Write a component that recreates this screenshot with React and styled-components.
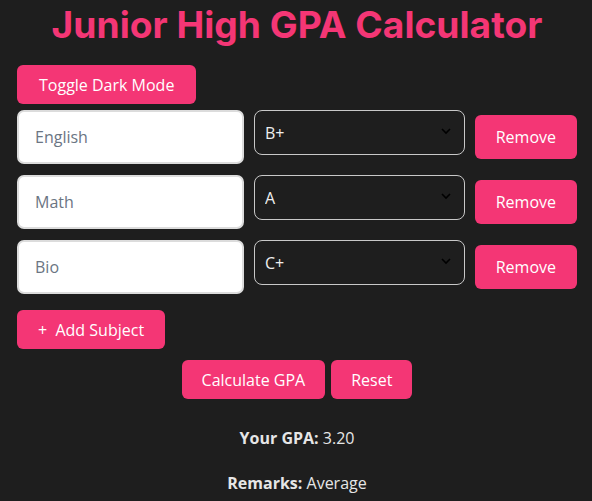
import React, { useState } from "react";
import styled, { createGlobalStyle } from "styled-components";

const GlobalStyle = createGlobalStyle`
  html, body {
    margin: 0;
    padding: 0;
    background: #1e1e1e;
  }
  body {
    font-family: "Open Sans", "Noto Sans", sans-serif;
    color: #e8e8e8;
  }
`;

const PINK = "#f43675";

const Page = styled.div`
  min-height: 501px;
  padding: 0 15px 0 17px;
  box-sizing: border-box;
`;

const Title = styled.h1`
  margin: 0;
  padding-top: 2px;
  height: 65px;
  box-sizing: border-box;
  text-align: center;
  font-family: "Inter", "Noto Sans", sans-serif;
  font-size: 37.2px;
  line-height: 45px;
  font-weight: 700;
  color: ${PINK};
`;

const Button = styled.button`
  background: ${PINK};
  color: #fff;
  border: none;
  border-radius: 6px;
  font-family: "Open Sans", "Noto Sans", sans-serif;
  font-size: 16px;
  height: ${(p) => p.$h || 39}px;
  padding: 0 ${(p) => p.$px || 20}px;
  cursor: pointer;
  margin-top: ${(p) => p.$mt || 0}px;
  flex-shrink: 0;
`;

const Rows = styled.div`
  display: flex;
  flex-direction: column;
  gap: 11px;
  margin-top: 6px;
`;

const Row = styled.div`
  display: flex;
  align-items: flex-start;
  gap: 10px;
`;

const SubjectInput = styled.input`
  width: 227px;
  height: 54px;
  box-sizing: border-box;
  border: 2px solid #dcdcdc;
  border-radius: 7px;
  background: #fff;
  padding: 0 16px;
  font-family: "Open Sans", "Noto Sans", sans-serif;
  font-size: 16px;
  color: #333;
  &::placeholder {
    color: #6b7583;
  }
`;

const SelectWrap = styled.div`
  position: relative;
  width: 212px;
  height: 45px;
`;

const GradeSelect = styled.select`
  appearance: none;
  width: 100%;
  height: 100%;
  box-sizing: border-box;
  background: #1e1e1e;
  border: 1px solid #c8c8c8;
  border-radius: 8px;
  color: #eee;
  font-family: "Open Sans", "Noto Sans", sans-serif;
  font-size: 16px;
  padding: 0 10px;
`;

const Chevron = styled.svg`
  position: absolute;
  right: 13px;
  top: 15px;
  pointer-events: none;
`;

const AddRow = styled.div`
  margin-top: 16px;
`;

const Actions = styled.div`
  display: flex;
  justify-content: center;
  gap: 6px;
  margin-top: 11px;
`;

const Result = styled.p`
  margin: ${(p) => p.$mt}px 0 0;
  text-align: center;
  font-size: 16px;
  line-height: 22px;
  color: #e6e6e6;
  b {
    font-weight: 700;
  }
`;

const grades = ["A", "B+", "B", "C+", "C", "D", "F"];

const App = () => {
  const [subjects] = useState([
    { name: "English", grade: "B+" },
    { name: "Math", grade: "A" },
    { name: "Bio", grade: "C+" },
  ]);

  return (
    <Page>
      <GlobalStyle />
      <Title>Junior High GPA Calculator</Title>
      <Button $px={22}>Toggle Dark Mode</Button>
      <Rows>
        {subjects.map((s) => (
          <Row key={s.name}>
            <SubjectInput placeholder={s.name} />
            <SelectWrap>
              <GradeSelect defaultValue={s.grade}>
                {grades.map((g) => (
                  <option key={g}>{g}</option>
                ))}
              </GradeSelect>
              <Chevron width="12" height="12" viewBox="0 0 12 12">
                <path d="M2 4l4 4 4-4" fill="none" stroke="#000" strokeWidth="1.6" />
              </Chevron>
            </SelectWrap>
            <Button $h={44} $px={21} $mt={5}>
              Remove
            </Button>
          </Row>
        ))}
      </Rows>
      <AddRow>
        <Button $px={21}>+&nbsp; Add Subject</Button>
      </AddRow>
      <Actions>
        <Button>Calculate GPA</Button>
        <Button>Reset</Button>
      </Actions>
      <Result $mt={28}>
        <b>Your GPA:</b> 3.20
      </Result>
      <Result $mt={23}>
        <b>Remarks:</b> Average
      </Result>
    </Page>
  );
};

export default App;
